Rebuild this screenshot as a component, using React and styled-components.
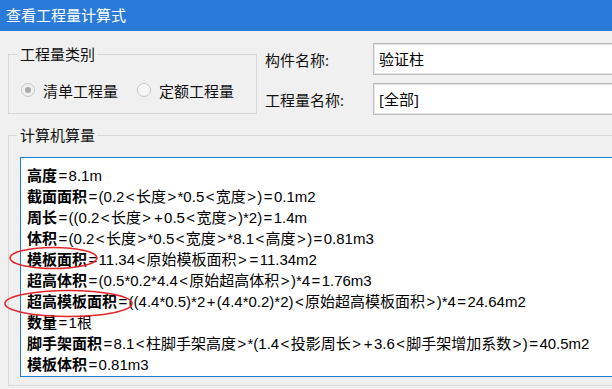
import React from 'react';
import styled, { createGlobalStyle } from 'styled-components';

const Global = createGlobalStyle`
  html, body {
    margin: 0;
    padding: 0;
    width: 612px;
    height: 389px;
    overflow: hidden;
    background: #f0f0f0;
  }
  body {
    font-family: "Open Sans", "Noto Sans CJK SC", sans-serif;
    color: #000;
  }
`;

const Window = styled.div`
  position: relative;
  width: 612px;
  height: 389px;
  overflow: hidden;
  background: #f0f0f0;
`;

const TitleBar = styled.div`
  height: 31px;
  line-height: 30px;
  padding-left: 6px;
  background: #2a7bd9;
  color: #fff;
  font-size: 15px;
`;

const TopRow = styled.div`
  display: flex;
  align-items: flex-start;
`;

const Group = styled.fieldset`
  flex: none;
  margin: ${(p) => p.$mt}px 0 0 8px;
  padding: 0 0 ${(p) => p.$pb}px 8px;
  width: ${(p) => p.$w}px;
  box-sizing: border-box;
  border: 1px solid #d7d7d7;
  border-radius: 0;
  min-width: 0;
`;

const Legend = styled.legend`
  padding: 0 2px 0 3px;
  font-size: 15px;
  line-height: 20px;
  color: #111;
`;

const RadioRow = styled.div`
  display: flex;
  align-items: center;
  height: 20px;
  margin-top: 16px;
  padding-left: 4px;
  white-space: nowrap;
`;

const Radio = styled.label`
  display: flex;
  align-items: center;
  gap: 8px;
  margin-right: 19px;
  font-size: 15px;
  color: #111;
`;

const Circle = styled.span`
  position: relative;
  flex: none;
  width: 14px;
  height: 14px;
  box-sizing: border-box;
  border-radius: 50%;
  border: 1px solid #c6c6c6;
  background: ${(p) => (p.$checked ? '#f0f0f0' : '#f7f7f7')};
  &::after {
    content: '';
    display: ${(p) => (p.$checked ? 'block' : 'none')};
    position: absolute;
    left: 3px;
    top: 3px;
    width: 6px;
    height: 6px;
    border-radius: 50%;
    background: #a9a9a9;
  }
`;

const Fields = styled.div`
  flex: none;
  display: flex;
  flex-direction: column;
  gap: 8px;
  margin: 12px 0 0 8px;
`;

const FieldRow = styled.div`
  display: flex;
  align-items: center;
  height: 32px;
`;

const FieldLabel = styled.span`
  width: 108px;
  font-size: 15px;
  color: #111;
`;

const Input = styled.div`
  width: 300px;
  height: 32px;
  box-sizing: border-box;
  border: 1px solid #bdbdbd;
  box-shadow: inset 0 0 0 1px #e4e4e4;
  background: #fff;
  padding-left: 5px;
  line-height: 30px;
  font-size: 15px;
`;

const Output = styled.div`
  margin: 12px 0 0 3px;
  width: 700px;
  height: 220px;
  box-sizing: border-box;
  border: 1px solid #1a7fd8;
  background: #fff;
  padding: 6px 0 0 6px;
  font-family: "Liberation Sans", "Noto Sans CJK SC", sans-serif;
  font-size: 15px;
  line-height: 21px;
  white-space: nowrap;
`;

const Line = styled.div`
  height: 21px;
`;

const Key = styled.b`
  font-weight: 700;
  font-family: "Noto Sans CJK SC", sans-serif;
`;

const Op = styled.span`
  padding: 0 1.4px;
`;

const Marks = styled.svg`
  position: absolute;
  left: 0;
  top: 0;
  pointer-events: none;
`;

const lines = [
  ['高度', '=8.1m'],
  ['截面面积', '=(0.2<长度>*0.5<宽度>)=0.1m2'],
  ['周长', '=((0.2<长度>+0.5<宽度>)*2)=1.4m'],
  ['体积', '=(0.2<长度>*0.5<宽度>*8.1<高度>)=0.81m3'],
  ['模板面积', '=11.34<原始模板面积>=11.34m2'],
  ['超高体积', '=(0.5*0.2*4.4<原始超高体积>)*4=1.76m3'],
  ['超高模板面积', '=((4.4*0.5)*2+(4.4*0.2)*2)<原始超高模板面积>)*4=24.64m2'],
  ['数量', '=1根'],
  ['脚手架面积', '=8.1<柱脚手架高度>*(1.4<投影周长>+3.6<脚手架增加系数>)=40.5m2'],
  ['模板体积', '=0.81m3'],
];

// the original font draws < > = + wider than Arial does
const renderFormula = (text) =>
  text.split(/([<>=+])/).map((part, i) =>
    /^[<>=+]$/.test(part) ? <Op key={i}>{part}</Op> : part
  );

export default function App() {
  return (
    <Window>
      <Global />
      <TitleBar>查看工程量计算式</TitleBar>
      <TopRow>
        <Group $mt={13} $pb={13} $w={249}>
          <Legend>工程量类别</Legend>
          <RadioRow>
            <Radio><Circle $checked />清单工程量</Radio>
            <Radio><Circle />定额工程量</Radio>
          </RadioRow>
        </Group>
        <Fields>
          <FieldRow>
            <FieldLabel>构件名称:</FieldLabel>
            <Input>验证柱</Input>
          </FieldRow>
          <FieldRow>
            <FieldLabel>工程量名称:</FieldLabel>
            <Input>[全部]</Input>
          </FieldRow>
        </Fields>
      </TopRow>
      <Group $mt={10} $pb={8} $w={720}>
        <Legend>计算机算量</Legend>
        <Output>
          {lines.map(([k, v]) => (
            <Line key={k}>
              <Key>{k}</Key>
              {renderFormula(v)}
            </Line>
          ))}
        </Output>
      </Group>
      <Marks width="612" height="389">
        <ellipse cx="53.5" cy="258" rx="43.5" ry="10.5" fill="none" stroke="#e3262c" strokeWidth="1.6" />
        <ellipse cx="68.5" cy="303.5" rx="63.5" ry="13" fill="none" stroke="#e3262c" strokeWidth="1.6" />
      </Marks>
    </Window>
  );
}
